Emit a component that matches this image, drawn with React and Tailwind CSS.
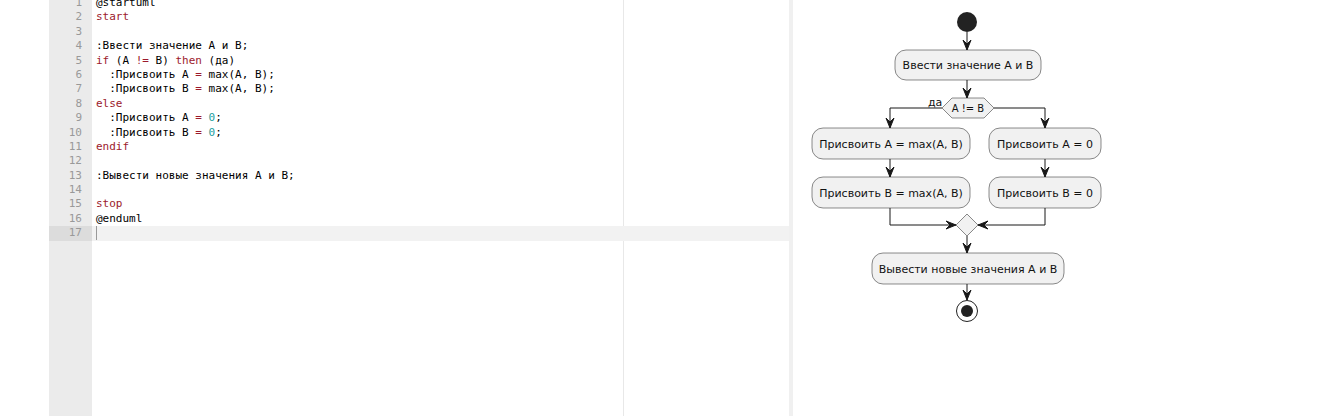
const KW = 'text-[#9c1a2c]'
const NUM = 'text-[#1a9e9e]'

const lines = [
  [['@startuml', '']],
  [['start', KW]],
  [],
  [[':Ввести значение A и B;', '']],
  [['if', KW], [' (A ', ''], ['!=', KW], [' B) ', ''], ['then', KW], [' (да)', '']],
  [['  :Присвоить A ', ''], ['=', KW], [' max(A, B);', '']],
  [['  :Присвоить B ', ''], ['=', KW], [' max(A, B);', '']],
  [['else', KW]],
  [['  :Присвоить A ', ''], ['=', KW], [' ', ''], ['0', NUM], [';', '']],
  [['  :Присвоить B ', ''], ['=', KW], [' ', ''], ['0', NUM], [';', '']],
  [['endif', KW]],
  [],
  [[':Вывести новые значения A и B;', '']],
  [],
  [['stop', KW]],
  [['@enduml', '']],
  [],
]

function Arrow({ x, y, dir = 'down' }) {
  let pts
  if (dir === 'down') pts = `${x - 4},${y - 10} ${x},${y} ${x + 4},${y - 10} ${x},${y - 6}`
  else if (dir === 'right') pts = `${x - 10},${y - 4} ${x},${y} ${x - 10},${y + 4} ${x - 6},${y}`
  else pts = `${x + 10},${y - 4} ${x},${y} ${x + 10},${y + 4} ${x + 6},${y}`
  return <polygon points={pts} fill="#181818" stroke="#181818" strokeWidth="1" />
}

function Box({ x, y, w, h = 31, label }) {
  return (
    <g>
      <rect x={x} y={y} width={w} height={h} rx="11" fill="#f1f1f1" stroke="#181818" strokeWidth="0.5" />
      <text x={x + w / 2} y={y + h / 2 + 4} textAnchor="middle" fontSize="11" fill="#111">{label}</text>
    </g>
  )
}

function Diagram() {
  return (
    <svg width="529" height="416" viewBox="793 0 529 416" style={{ fontFamily: '"DejaVu Sans", sans-serif' }}>
      <circle cx="967" cy="22" r="10" fill="#222" />
      <line x1="967" y1="32" x2="967" y2="50" stroke="#181818" />
      <Arrow x={967} y={50} />
      <Box x={895} y={50} w={146} h={30} label="Ввести значение A и B" />
      <line x1="967" y1="80" x2="967" y2="98" stroke="#181818" />
      <Arrow x={967} y={98} />
      <polygon points="942,108 952,98 984,98 994,108 984,118 952,118" fill="#f1f1f1" stroke="#181818" strokeWidth="0.5" />
      <text x="968" y="112" textAnchor="middle" fontSize="10" fill="#111">A != B</text>
      <text x="928" y="106" fontSize="11" fill="#111">да</text>
      <polyline points="942,108 890,108 890,128" fill="none" stroke="#181818" />
      <Arrow x={890} y={128} />
      <polyline points="994,108 1045,108 1045,128" fill="none" stroke="#181818" />
      <Arrow x={1045} y={128} />
      <Box x={812} y={128} w={158} label="Присвоить A = max(A, B)" />
      <Box x={989} y={128} w={112} label="Присвоить A = 0" />
      <line x1="890" y1="159" x2="890" y2="177" stroke="#181818" />
      <Arrow x={890} y={177} />
      <line x1="1045" y1="159" x2="1045" y2="177" stroke="#181818" />
      <Arrow x={1045} y={177} />
      <Box x={812} y={177} w={158} label="Присвоить B = max(A, B)" />
      <Box x={989} y={177} w={112} label="Присвоить B = 0" />
      <polyline points="890,208 890,225 956,225" fill="none" stroke="#181818" />
      <Arrow x={956} y={225} dir="right" />
      <polyline points="1045,208 1045,225 978,225" fill="none" stroke="#181818" />
      <Arrow x={978} y={225} dir="left" />
      <polygon points="956,225 967,214 978,225 967,236" fill="#f1f1f1" stroke="#181818" strokeWidth="0.5" />
      <line x1="967" y1="236" x2="967" y2="253" stroke="#181818" />
      <Arrow x={967} y={253} />
      <Box x={872} y={253} w={192} label="Вывести новые значения A и B" />
      <line x1="967" y1="284" x2="967" y2="300" stroke="#181818" />
      <Arrow x={967} y={300} />
      <circle cx="967" cy="311" r="10.5" fill="none" stroke="#222" strokeWidth="1" />
      <circle cx="967" cy="311" r="6" fill="#222" />
    </svg>
  )
}

export default function App() {
  return (
    <div className="flex h-[416px] w-[1322px] overflow-hidden bg-white">
      <div className="w-[49px] bg-white"></div>
      <div className="w-[43px] bg-[#ebebeb] overflow-hidden font-['DejaVu_Sans_Mono',monospace] text-[11px] leading-[14.4px] text-[#999]">
        <div className="-mt-[4px]">
          {lines.map((_, i) => (
            <div key={i} className={`h-[14.4px] pr-[10px] text-right ${i === 16 ? 'bg-[#dcdcdc]' : ''}`}>{i + 1}</div>
          ))}
        </div>
      </div>
      <div className="relative w-[697px] overflow-hidden font-['DejaVu_Sans_Mono',monospace] text-[11px] leading-[14.4px] text-[#000]">
        <div className="absolute left-[531px] top-0 h-full w-px bg-[#e8e8e8]"></div>
        <div className="relative -mt-[4px]">
          {lines.map((segs, i) => (
            <div key={i} className={`h-[14.4px] pl-[4px] whitespace-pre ${i === 16 ? 'bg-[#f2f2f2]' : ''}`}>
              {segs.map(([t, c], j) => (
                <span key={j} className={c}>{t}</span>
              ))}
              {i === 16 && <span className="inline-block h-[14px] w-px bg-[#999] align-top"></span>}
            </div>
          ))}
        </div>
      </div>
      <div className="w-[4px] bg-[#f0f0f0]"></div>
      <div className="flex-1 overflow-hidden">
        <Diagram />
      </div>
    </div>
  )
}
